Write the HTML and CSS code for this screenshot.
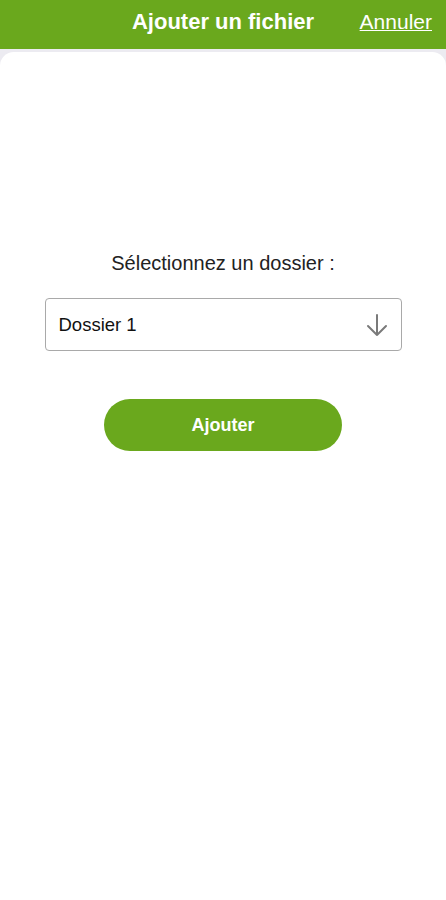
FILE: index.html
```html
<!DOCTYPE html>
<html lang="fr">
<head>
  <meta charset="UTF-8">
  <meta name="viewport" content="width=device-width, initial-scale=1.0">
  <title>Ajouter un fichier</title>
  <link rel="stylesheet" href="styles.css">
</head>
<body>
  <header class="topbar">
    <h1 class="title">Ajouter un fichier</h1>
    <a class="cancel" href="#">Annuler</a>
  </header>
  <main class="sheet">
    <p class="label">Sélectionnez un dossier :</p>
    <div class="select">
      <span>Dossier 1</span>
      <svg class="arrow" width="26" height="26" viewBox="0 0 26 26">
        <path d="M13 3 V23 M4 14 L13 23 L22 14" fill="none" stroke="#7a7a7a" stroke-width="2" stroke-linecap="round" stroke-linejoin="round"/>
      </svg>
    </div>
    <button class="btn">Ajouter</button>
  </main>
</body>
</html>
```

FILE: styles.css
```css
html, body{
  margin: 0;
  height: 100%;
}
body{
  font-family: "Liberation Sans", Arial, sans-serif;
  background: #ecebf1;
  display: flex;
  flex-direction: column;
}
.topbar{
  position: relative;
  height: 49px;
  background: #6aa81d;
  display: flex;
  justify-content: center;
  align-items: center;
  color: #fff;
  flex-shrink: 0;
}
.title{
  margin: 0;
  font-size: 22px;
  font-weight: bold;
  padding-bottom: 5px;
}
.cancel{
  position: absolute;
  right: 14px;
  top: 10px;
  color: #fff;
  font-size: 21px;
  text-decoration: underline;
  text-decoration-thickness: 1px;
}
.sheet{
  flex: 1;
  margin-top: 3px;
  background: #fff;
  border-radius: 14px 14px 0 0;
  display: flex;
  flex-direction: column;
  align-items: center;
  padding-top: 200px;
}
.label{
  margin: 0;
  font-size: 20px;
  color: #222;
  line-height: 22px;
}
.select{
  box-sizing: border-box;
  width: 357px;
  height: 53px;
  margin-top: 24px;
  border: 1px solid #a9a9a9;
  border-radius: 4px;
  display: flex;
  align-items: center;
  justify-content: space-between;
  padding: 0 11px 0 13px;
  font-size: 18.5px;
  color: #111;
}
.arrow{
  display: block;
}
.btn{
  margin-top: 48px;
  width: 238px;
  height: 52px;
  border: none;
  border-radius: 26px;
  background: #6aa81d;
  color: #fff;
  font-family: inherit;
  font-size: 18px;
  font-weight: bold;
}
```
